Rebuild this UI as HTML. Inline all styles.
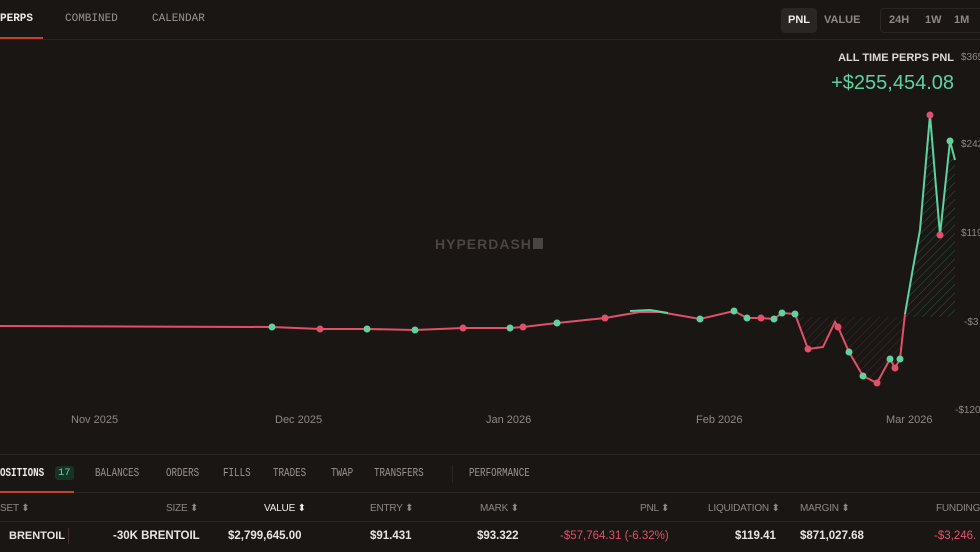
<!DOCTYPE html>
<html><head><meta charset="utf-8"><style>
*{margin:0;padding:0;box-sizing:border-box}
body{width:980px;height:552px;overflow:hidden;background:#1a1614;font-family:"Liberation Sans",sans-serif;color:#e8e4e0;position:relative}
.mono{font-family:"Liberation Mono",monospace}
.t{position:absolute;white-space:nowrap}
.tab{font-size:11px;color:#9a948e;top:13px}
.btn{position:absolute;font-size:11px;font-weight:bold;color:#8e8884}
.hdr{font-size:10px;color:#8e8884;top:503px;letter-spacing:-0.2px}
.cell{font-size:11.5px;font-weight:bold;color:#e8e4e0;top:530px}
.ax{font-size:10px;color:#8e8884}
.bt{top:467px;font-size:11.5px;color:#9a948e;transform:scaleX(0.8);transform-origin:0 0}
</style></head><body>
<div style="position:absolute;left:0;top:39px;width:980px;height:1px;background:#2a2522"></div>
<div style="position:absolute;left:0;top:37px;width:43px;height:2px;background:#c0442c"></div>
<div class="t tab mono" style="left:0;color:#f0ece8;font-weight:bold">PERPS</div>
<div class="t tab mono" style="left:65px">COMBINED</div>
<div class="t tab mono" style="left:152px">CALENDAR</div>
<div style="position:absolute;left:781px;top:8px;width:36px;height:25px;background:#2a2624;border-radius:4px"></div>
<div class="btn" style="left:788px;top:14px;color:#f0ece8">PNL</div>
<div class="btn" style="left:824px;top:14px">VALUE</div>
<div style="position:absolute;left:880px;top:8px;width:110px;height:25px;border:1px solid #2a2522;border-radius:4px"></div>
<div class="btn" style="left:889px;top:14px">24H</div>
<div class="btn" style="left:925px;top:14px">1W</div>
<div class="btn" style="left:954px;top:14px">1M</div>
<div class="t" style="right:26px;top:52px;font-size:11px;font-weight:bold;color:#ddd8d4">ALL TIME PERPS PNL</div>
<div class="t" style="right:26px;top:72px;font-size:20px;color:#5fd2a0">+$255,454.08</div>
<div class="t" style="left:435px;top:236px;font-size:14px;font-weight:bold;color:#4a4542;letter-spacing:1px">HYPERDASH<span style="display:inline-block;width:10px;height:11px;background:#4a4542;margin-left:1px"></span></div>
<div class="t ax" style="left:961px;top:52px">$365</div>
<div class="t ax" style="left:961px;top:139px">$242</div>
<div class="t ax" style="left:961px;top:228px">$119</div>
<div class="t ax" style="left:964px;top:317px">-$3</div>
<div class="t ax" style="left:955px;top:405px">-$120</div>
<div class="t ax" style="left:71px;top:414px;font-size:11px">Nov 2025</div>
<div class="t ax" style="left:275px;top:414px;font-size:11px">Dec 2025</div>
<div class="t ax" style="left:486px;top:414px;font-size:11px">Jan 2026</div>
<div class="t ax" style="left:696px;top:414px;font-size:11px">Feb 2026</div>
<div class="t ax" style="left:886px;top:414px;font-size:11px">Mar 2026</div>
<svg width="980" height="552" style="position:absolute;left:0;top:0">
<defs>
<pattern id="hg" width="6" height="6" patternUnits="userSpaceOnUse" patternTransform="rotate(45)"><line x1="0" y1="0" x2="0" y2="6" stroke="#2f5a48" stroke-width="1"/></pattern>
<pattern id="hr" width="6" height="6" patternUnits="userSpaceOnUse" patternTransform="rotate(45)"><line x1="0" y1="0" x2="0" y2="6" stroke="#4a2a2e" stroke-width="1"/></pattern>
<clipPath id="ab"><rect x="0" y="40" width="980" height="277"/></clipPath>
<clipPath id="be"><rect x="0" y="317" width="980" height="140"/></clipPath>
</defs>
<g clip-path="url(#be)"><path d="M600,317 L605,318 L650,311 L700,319 L734,311 L747,318 L761,318 L774,319 L782,313 L795,314 L808,349 L823,347 L835,322 L838,327 L849,352 L863,376 L877,383 L890,359 L895,368 L900,359 L905,314 L905,317 Z" fill="url(#hr)"/></g>
<g clip-path="url(#ab)"><path d="M905,317 L905,314 L913,268 L920,230 L930,115 L940,235 L950,141 L955,160 L955,317 Z" fill="url(#hg)"/></g>
<polyline fill="none" stroke="#e0506a" stroke-width="2" points="0,326 272,327 320,329 367,329 415,330 463,328 510,328 523,327 557,323 605,318 640,312 660,312 700,319 734,311 747,318 761,318 774,319 782,313 795,314 808,349 823,347 835,322 838,327 849,352 863,376 877,383 890,359 895,368 900,359 905,314"/>
<polyline fill="none" stroke="#5fd2a0" stroke-width="2" points="630,311 650,310 668,313"/>
<polyline fill="none" stroke="#5fd2a0" stroke-width="2" points="905,314 913,268 920,230 930,115 940,235 950,141 955,160"/>
<g fill="#5fd2a0"><circle cx="272" cy="327" r="3.5"/><circle cx="367" cy="329" r="3.5"/><circle cx="415" cy="330" r="3.5"/><circle cx="510" cy="328" r="3.5"/><circle cx="557" cy="323" r="3.5"/><circle cx="700" cy="319" r="3.5"/><circle cx="734" cy="311" r="3.5"/><circle cx="747" cy="318" r="3.5"/><circle cx="774" cy="319" r="3.5"/><circle cx="782" cy="313" r="3.5"/><circle cx="795" cy="314" r="3.5"/><circle cx="849" cy="352" r="3.5"/><circle cx="863" cy="376" r="3.5"/><circle cx="890" cy="359" r="3.5"/><circle cx="900" cy="359" r="3.5"/><circle cx="950" cy="141" r="3.5"/></g>
<g fill="#e0506a"><circle cx="320" cy="329" r="3.5"/><circle cx="463" cy="328" r="3.5"/><circle cx="523" cy="327" r="3.5"/><circle cx="605" cy="318" r="3.5"/><circle cx="761" cy="318" r="3.5"/><circle cx="808" cy="349" r="3.5"/><circle cx="838" cy="327" r="3.5"/><circle cx="877" cy="383" r="3.5"/><circle cx="895" cy="368" r="3.5"/><circle cx="930" cy="115" r="3.5"/><circle cx="940" cy="235" r="3.5"/></g>
</svg>
<div style="position:absolute;left:0;top:454px;width:980px;height:1px;background:#2a2522"></div>
<div style="position:absolute;left:0;top:492px;width:980px;height:1px;background:#2a2522"></div>
<div style="position:absolute;left:0;top:491px;width:74px;height:2px;background:#c0442c"></div>
<div style="position:absolute;left:452px;top:465px;width:1px;height:18px;background:#2a2522"></div>
<div class="t mono bt" style="left:0;font-weight:bold;color:#f0ece8">OSITIONS</div>
<div class="t mono" style="left:55px;top:466px;font-size:10.5px;color:#5fd2a0;background:#173227;padding:1px 3px;border-radius:3px">17</div>
<div class="t mono bt" style="left:95px">BALANCES</div>
<div class="t mono bt" style="left:166px">ORDERS</div>
<div class="t mono bt" style="left:223px">FILLS</div>
<div class="t mono bt" style="left:273px">TRADES</div>
<div class="t mono bt" style="left:331px">TWAP</div>
<div class="t mono bt" style="left:374px">TRANSFERS</div>
<div class="t mono bt" style="left:469px">PERFORMANCE</div>
<div class="t hdr" style="left:0">SET ⬍</div>
<div class="t hdr" style="left:166px">SIZE ⬍</div>
<div class="t hdr" style="left:264px;color:#f0ece8">VALUE ⬍</div>
<div class="t hdr" style="left:370px">ENTRY ⬍</div>
<div class="t hdr" style="left:480px">MARK ⬍</div>
<div class="t hdr" style="left:640px">PNL ⬍</div>
<div class="t hdr" style="left:708px">LIQUIDATION ⬍</div>
<div class="t hdr" style="left:800px">MARGIN ⬍</div>
<div class="t hdr" style="left:936px">FUNDING</div>
<div style="position:absolute;left:0;top:521px;width:980px;height:1px;background:#2a2522"></div>
<div class="t cell" style="left:9px;font-size:11px">BRENTOIL</div>
<div style="position:absolute;left:68px;top:528px;width:1px;height:16px;background:#4a2a2e"></div>
<div class="t cell" style="left:113px">-30K BRENTOIL</div>
<div class="t cell" style="left:228px">$2,799,645.00</div>
<div class="t cell" style="left:370px">$91.431</div>
<div class="t cell" style="left:477px">$93.322</div>
<div class="t cell" style="left:560px;color:#e0506a;font-weight:normal">-$57,764.31 (-6.32%)</div>
<div class="t cell" style="left:735px">$119.41</div>
<div class="t cell" style="left:800px">$871,027.68</div>
<div class="t cell" style="left:934px;color:#e0506a;font-weight:normal">-$3,246.</div>
</body></html>
